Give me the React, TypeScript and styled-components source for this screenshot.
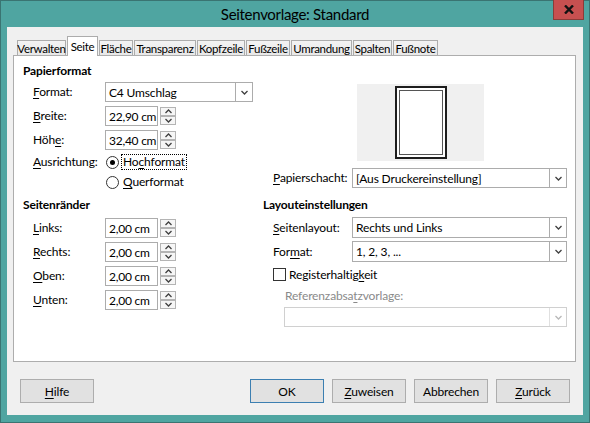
import styled, { createGlobalStyle } from "styled-components";

const GlobalStyle = createGlobalStyle`
  html, body { margin: 0; padding: 0; }
  body {
    width: 590px;
    height: 423px;
    overflow: hidden;
    font-family: Lato, "Noto Sans", sans-serif;
    font-size: 12px;
    letter-spacing: -0.15px;
    color: #000;
  }
  * { box-sizing: border-box; }
`;

const Frame = styled.div`
  width: 590px;
  height: 423px;
  border: 1px solid #3a7472;
  background: #4fa5a1;
  display: flex;
  flex-direction: column;
  padding: 0 6px 7px 6px;
`;

const TitleBar = styled.div`
  height: 26px;
  display: grid;
  grid-template-columns: 1fr auto 1fr;
  align-items: start;
`;

const Title = styled.div`
  grid-column: 2;
  font-size: 15px;
  letter-spacing: -0.3px;
  line-height: 26px;
  color: #000;
`;

const CloseButton = styled.div`
  grid-column: 3;
  justify-self: end;
  width: 31px;
  height: 20px;
  margin: -1px -1px 0 0;
  background: #c75050;
  border: 1px solid #8a3c38;
  border-top: none;
  display: flex;
  align-items: center;
  justify-content: center;
`;

const Client = styled.div`
  flex: 1;
  background: #f0f0f0;
  padding: 9px 7px 12px 6px;
  display: flex;
  flex-direction: column;
`;

const TabRow = styled.div`
  display: flex;
  align-items: flex-end;
  height: 19px;
  padding-left: 4px;
  position: relative;
  z-index: 1;
`;

const Tab = styled.div<{ $active?: boolean; $w: number }>`
  width: ${({ $w }) => $w}px;
  height: ${({ $active }) => ($active ? 20 : 15)}px;
  margin-bottom: ${({ $active }) => ($active ? -1 : 0)}px;
  margin-right: 1px;
  border: 1px solid #acacac;
  border-bottom: none;
  background: ${({ $active }) =>
    $active ? "#fff" : "linear-gradient(#f3f3f3, #e8e8e8)"};
  display: flex;
  align-items: center;
  justify-content: center;
  font-size: 11.5px;
  line-height: 13px;
  letter-spacing: -0.3px;
  padding-top: ${({ $active }) => ($active ? 0 : 1)}px;
  white-space: nowrap;
`;

const Panel = styled.div`
  height: 307px;
  background: #fff;
  border: 1px solid #adadad;
  padding: 7px 8px 0 9px;
  display: grid;
  grid-template-columns: 240px 1fr;
  row-gap: 7px;
  align-content: start;
`;

const Group = styled.div<{ $indent?: number }>`
  display: flex;
  flex-direction: column;
  padding-left: ${({ $indent }) => $indent ?? 0}px;
`;

const Heading = styled.div`
  font-weight: bold;
  line-height: 16px;
  height: 16px;
`;

const FormGrid = styled.div<{ $label: number; $top: number; $gap: number; $indent: number }>`
  display: grid;
  grid-template-columns: ${({ $label }) => $label}px 1fr;
  row-gap: ${({ $gap }) => $gap}px;
  align-items: center;
  margin: ${({ $top }) => $top}px 0 0 ${({ $indent }) => $indent}px;
`;

const Label = styled.div`
  line-height: 16px;
  white-space: nowrap;
`;

const Key = styled.span`
  text-decoration: underline;
  text-underline-offset: 2px;
`;

const Combo = styled.div<{ $w?: number; $h?: number; $disabled?: boolean }>`
  width: ${({ $w }) => ($w ? `${$w}px` : "auto")};
  height: ${({ $h }) => $h ?? 20}px;
  border: 1px solid ${({ $disabled }) => ($disabled ? "#d0d0d0" : "#acacac")};
  background: #fff;
  display: flex;
  align-items: stretch;
`;

const ComboValue = styled.div`
  flex: 1;
  padding-left: 3px;
  display: flex;
  align-items: center;
  white-space: nowrap;
  overflow: hidden;
`;

const DropButton = styled.div<{ $disabled?: boolean }>`
  width: 17px;
  border-left: 1px solid ${({ $disabled }) => ($disabled ? "#e0e0e0" : "#acacac")};
  display: flex;
  align-items: center;
  justify-content: center;
  color: ${({ $disabled }) => ($disabled ? "#b8b8b8" : "#404040")};
`;

const SpinField = styled.div`
  display: flex;
  gap: 2px;
  height: 20px;
`;

const TextBox = styled.div`
  width: 53px;
  border: 1px solid #acacac;
  padding-left: 3px;
  display: flex;
  align-items: center;
  letter-spacing: -0.25px;
  white-space: nowrap;
`;

const SpinButtons = styled.div`
  width: 16px;
  display: flex;
  flex-direction: column;
  justify-content: space-between;
  padding: 1px 0;
`;

const SpinButton = styled.div`
  height: 9px;
  border: 1px solid #b4b4b4;
  background: #f6f6f6;
  display: flex;
  align-items: center;
  justify-content: center;
  color: #404040;
`;

const RadioRow = styled.div`
  display: flex;
  align-items: center;
  height: 16px;
  margin-left: 1px;
`;

const Radio = styled.span<{ $checked?: boolean }>`
  width: 13px;
  height: 13px;
  border-radius: 50%;
  border: 1px solid #333;
  background: #fff;
  display: flex;
  align-items: center;
  justify-content: center;
  margin-right: 2px;

  &::after {
    content: "";
    width: 5px;
    height: 5px;
    border-radius: 50%;
    background: ${({ $checked }) => ($checked ? "#000" : "transparent")};
  }
`;

const OptionText = styled.span<{ $focused?: boolean }>`
  border: 1px dotted ${({ $focused }) => ($focused ? "#000" : "transparent")};
  padding: 0 1px;
  line-height: 14px;
`;

const Preview = styled.div`
  width: 127px;
  height: 77px;
  margin: 21px 0 0 84px;
  background: #f0f0f0;
  display: flex;
  align-items: center;
  justify-content: center;
`;

const Page = styled.div`
  width: 52px;
  height: 73px;
  border: 2px solid #1e1e1e;
  padding: 2px;
  background: #fff;
  display: flex;
`;

const PageInner = styled.div`
  flex: 1;
  border: 1px solid #555;
`;

const CheckRow = styled.div`
  display: flex;
  align-items: center;
  height: 16px;
  margin: 4px 0 0 10px;
`;

const Checkbox = styled.span`
  width: 13px;
  height: 13px;
  border: 1px solid #333;
  background: #fff;
  margin-right: 3px;
`;

const DisabledLabel = styled.div`
  color: #8a8a8a;
  line-height: 16px;
  margin: 6px 0 0 22px;
`;

const DisabledCombo = styled.div`
  margin: 3px 0 0 21px;
`;

const ButtonRow = styled.div`
  display: flex;
  gap: 8px;
  margin: 17px 6px 0 7px;
`;

const Button = styled.div<{ $primary?: boolean; $push?: boolean }>`
  width: 74px;
  height: 24px;
  background: #e1e1e1;
  border: 1px solid ${({ $primary }) => ($primary ? "#3c7fb1" : "#adadad")};
  display: flex;
  align-items: center;
  justify-content: center;
  margin-left: ${({ $push }) => ($push ? "auto" : "0")};
`;

const Chevron = ({ up }: { up?: boolean }) => (
  <svg width="7" height="5" viewBox="0 0 7 5">
    <path
      d={up ? "M0.5 4 L3.5 1 L6.5 4" : "M0.5 1 L3.5 4 L6.5 1"}
      fill="none"
      stroke="currentColor"
      strokeWidth="1.3"
    />
  </svg>
);

const ComboBox = ({
  value,
  w,
  h,
  disabled,
}: {
  value: string;
  w?: number;
  h?: number;
  disabled?: boolean;
}) => (
  <Combo $w={w} $h={h} $disabled={disabled}>
    <ComboValue>{value}</ComboValue>
    <DropButton $disabled={disabled}>
      <Chevron />
    </DropButton>
  </Combo>
);

const Spin = ({ value }: { value: string }) => (
  <SpinField>
    <TextBox>{value}</TextBox>
    <SpinButtons>
      <SpinButton>
        <Chevron up />
      </SpinButton>
      <SpinButton>
        <Chevron />
      </SpinButton>
    </SpinButtons>
  </SpinField>
);

const tabs = [
  { name: "Verwalten", w: 49 },
  { name: "Seite", w: 31, active: true },
  { name: "Fläche", w: 34 },
  { name: "Transparenz", w: 62 },
  { name: "Kopfzeile", w: 48 },
  { name: "Fußzeile", w: 44 },
  { name: "Umrandung", w: 61 },
  { name: "Spalten", w: 39 },
  { name: "Fußnote", w: 45 },
];

const margins = [
  { k: "L", rest: "inks:" },
  { k: "R", rest: "echts:" },
  { k: "O", rest: "ben:" },
  { k: "U", rest: "nten:" },
];

export default function App() {
  return (
    <>
      <GlobalStyle />
      <Frame>
        <TitleBar>
          <Title>Seitenvorlage: Standard</Title>
          <CloseButton>
            <svg width="10" height="9" viewBox="0 0 10 9">
              <path d="M1 0.5 L9 8.5 M9 0.5 L1 8.5" stroke="#111" strokeWidth="2.4" />
            </svg>
          </CloseButton>
        </TitleBar>
        <Client>
          <TabRow>
            {tabs.map((t) => (
              <Tab key={t.name} $w={t.w} $active={t.active}>
                {t.name}
              </Tab>
            ))}
          </TabRow>
          <Panel>
            <Group>
              <Heading>Papierformat</Heading>
              <FormGrid $label={72} $top={3} $gap={4} $indent={10}>
                <Label>
                  <Key>F</Key>ormat:
                </Label>
                <ComboBox value="C4 Umschlag" w={148} />
                <Label>
                  <Key>B</Key>reite:
                </Label>
                <Spin value="22,90 cm" />
                <Label>
                  Höh<Key>e</Key>:
                </Label>
                <Spin value="32,40 cm" />
                <Label>
                  <Key>A</Key>usrichtung:
                </Label>
                <RadioRow>
                  <Radio $checked />
                  <OptionText $focused>
                    Ho<Key>c</Key>hformat
                  </OptionText>
                </RadioRow>
                <span />
                <RadioRow>
                  <Radio />
                  <OptionText>
                    <Key>Q</Key>uerformat
                  </OptionText>
                </RadioRow>
              </FormGrid>
            </Group>

            <Group $indent={10}>
              <Preview>
                <Page>
                  <PageInner />
                </Page>
              </Preview>
              <FormGrid $label={79} $top={7} $gap={3} $indent={0}>
                <Label>
                  <Key>P</Key>apierschacht:
                </Label>
                <ComboBox value="[Aus Druckereinstellung]" />
              </FormGrid>
            </Group>

            <Group>
              <Heading>Seitenränder</Heading>
              <FormGrid $label={72} $top={5} $gap={4} $indent={10}>
                {margins.map((m) => [
                  <Label key={m.k + "l"}>
                    <Key>{m.k}</Key>
                    {m.rest}
                  </Label>,
                  <Spin key={m.k + "s"} value="2,00 cm" />,
                ])}
              </FormGrid>
            </Group>

            <Group>
              <Heading>Layouteinstellungen</Heading>
              <FormGrid $label={79} $top={4} $gap={3} $indent={10}>
                <Label>
                  <Key>S</Key>eitenlayout:
                </Label>
                <ComboBox value="Rechts und Links" h={21} />
                <Label>
                  For<Key>m</Key>at:
                </Label>
                <ComboBox value="1, 2, 3, ..." h={21} />
              </FormGrid>
              <CheckRow>
                <Checkbox />
                <span>
                  Registerhaltig<Key>k</Key>eit
                </span>
              </CheckRow>
              <DisabledLabel>
                Referenzabsa<Key>t</Key>zvorlage:
              </DisabledLabel>
              <DisabledCombo>
                <ComboBox value="" disabled />
              </DisabledCombo>
            </Group>
          </Panel>
          <ButtonRow>
            <Button>
              <span>
                <Key>H</Key>ilfe
              </span>
            </Button>
            <Button $primary $push>
              OK
            </Button>
            <Button>
              <span>
                <Key>Z</Key>uweisen
              </span>
            </Button>
            <Button>Abbrechen</Button>
            <Button>
              <span>
                <Key>Z</Key>urück
              </span>
            </Button>
          </ButtonRow>
        </Client>
      </Frame>
    </>
  );
}
